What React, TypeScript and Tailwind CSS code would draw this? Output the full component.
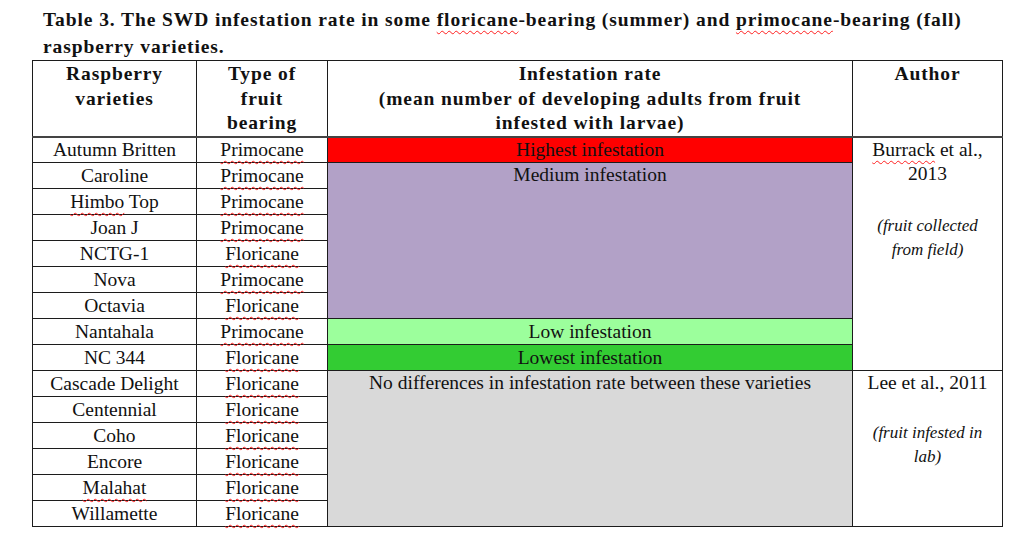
import type { ReactNode } from 'react';

const squiggle = 'underline decoration-wavy decoration-[#ff2020] decoration-1 underline-offset-[4px]';

function Sp({ children }: { children: ReactNode }) {
  return <span className={squiggle}>{children}</span>;
}

type Row = { name: ReactNode; type: 'Primocane' | 'Floricane' };

const rows: Row[] = [
  { name: 'Autumn Britten', type: 'Primocane' },
  { name: 'Caroline', type: 'Primocane' },
  { name: <><Sp>Himbo</Sp> Top</>, type: 'Primocane' },
  { name: 'Joan J', type: 'Primocane' },
  { name: 'NCTG-1', type: 'Floricane' },
  { name: 'Nova', type: 'Primocane' },
  { name: 'Octavia', type: 'Floricane' },
  { name: 'Nantahala', type: 'Primocane' },
  { name: 'NC 344', type: 'Floricane' },
  { name: 'Cascade Delight', type: 'Floricane' },
  { name: 'Centennial', type: 'Floricane' },
  { name: 'Coho', type: 'Floricane' },
  { name: 'Encore', type: 'Floricane' },
  { name: <Sp>Malahat</Sp>, type: 'Floricane' },
  { name: 'Willamette', type: 'Floricane' },
];

const line = 'border border-[#1c1c1c]';
const cell = `${line} p-0 h-[26px] leading-[24px] text-center align-middle`;
const top = `${line} px-1 pt-0 text-center align-top leading-[24.5px]`;
const head = `${line} border-b-2 border-b-[#444] pt-[1px] align-top`;

export default function App() {
  return (
    <div className="w-[1024px] h-[542px] bg-white text-[#111] font-['Liberation_Serif',serif]">
      <p className="pl-[43px] pt-[6px] text-[19.5px] font-bold leading-[27px] tracking-[0.9px]">
        Table 3. The SWD infestation rate in some <Sp>floricane</Sp>-bearing (summer) and <Sp>primocane</Sp>-bearing (fall)
        <br />
        raspberry varieties.
      </p>
      <table className="ml-[32px] w-[970px] table-fixed border-collapse text-[19.5px]">
        <colgroup>
          <col className="w-[164px]" />
          <col className="w-[131px]" />
          <col className="w-[525px]" />
          <col className="w-[150px]" />
        </colgroup>
        <thead>
          <tr className="font-bold leading-[24.5px] tracking-[0.9px]">
            <th className={`${head} h-[76px]`}>
              Raspberry
              <br />
              varieties
            </th>
            <th className={head}>
              Type of
              <br />
              fruit
              <br />
              bearing
            </th>
            <th className={head}>
              Infestation rate
              <br />
              (mean number of developing adults from fruit
              <br />
              infested with larvae)
            </th>
            <th className={head}>Author</th>
          </tr>
        </thead>
        <tbody>
          {rows.map((r, i) => (
            <tr key={i}>
              <td className={cell}>{r.name}</td>
              <td className={cell}>
                <Sp>{r.type}</Sp>
              </td>
              {i === 0 && <td className={`${cell} bg-[#ff0000]`}>Highest infestation</td>}
              {i === 1 && (
                <td rowSpan={6} className={`${top} bg-[#b2a1c7]`}>
                  Medium infestation
                </td>
              )}
              {i === 7 && <td className={`${cell} bg-[#9cff9c]`}>Low infestation</td>}
              {i === 8 && <td className={`${cell} bg-[#33cc33]`}>Lowest infestation</td>}
              {i === 9 && (
                <td rowSpan={6} className={`${top} bg-[#d9d9d9]`}>
                  No differences in infestation rate between these varieties
                </td>
              )}
              {i === 0 && (
                <td rowSpan={9} className={top}>
                  <Sp>Burrack</Sp> et al.,
                  <br />
                  2013
                  <br />
                  <br />
                  <span className="block mt-[3px] text-[17px] italic leading-[24px]">
                    (fruit collected
                    <br />
                    from field)
                  </span>
                </td>
              )}
              {i === 9 && (
                <td rowSpan={6} className={top}>
                  Lee et al., 2011
                  <br />
                  <br />
                  <span className="block mt-[1px] text-[17px] italic leading-[24px]">
                    (fruit infested in
                    <br />
                    lab)
                  </span>
                </td>
              )}
            </tr>
          ))}
        </tbody>
      </table>
    </div>
  );
}
